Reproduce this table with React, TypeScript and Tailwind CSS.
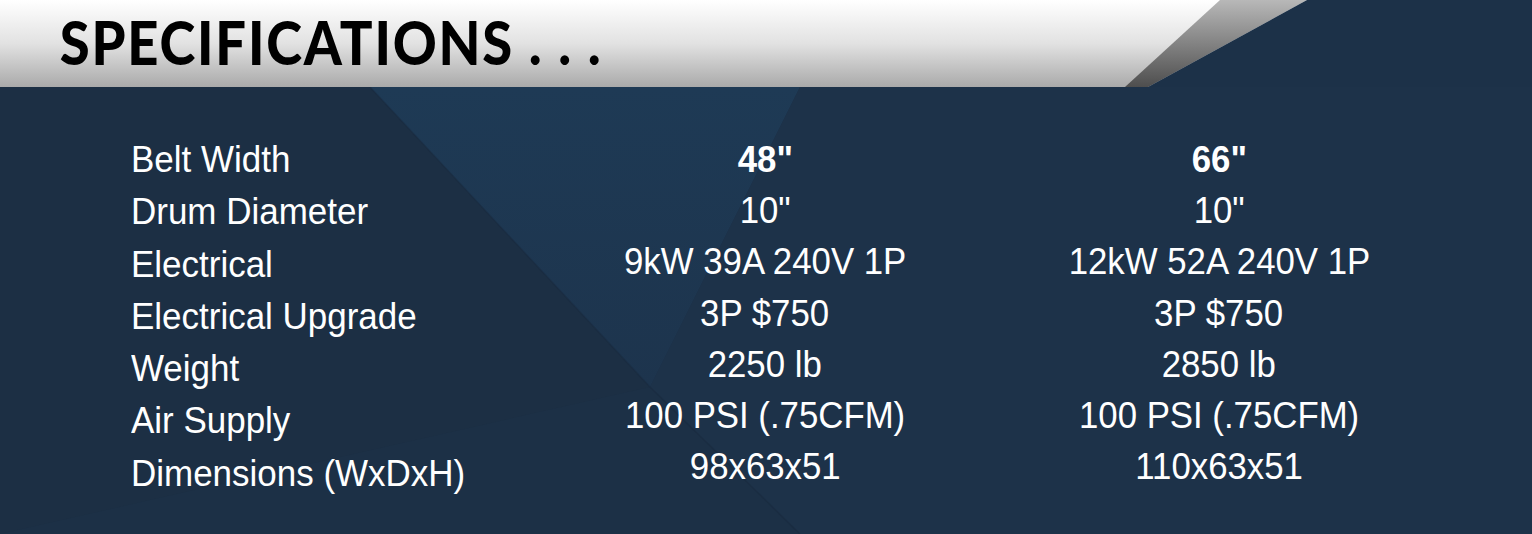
const specs: { label: string; a: string; b: string; bold?: boolean }[] = [
  { label: "Belt Width", a: '48"', b: '66"', bold: true },
  { label: "Drum Diameter", a: '10"', b: '10"' },
  { label: "Electrical", a: "9kW 39A 240V 1P", b: "12kW 52A 240V 1P" },
  { label: "Electrical Upgrade", a: "3P $750", b: "3P $750" },
  { label: "Weight", a: "2250 lb", b: "2850 lb" },
  { label: "Air Supply", a: "100 PSI (.75CFM)", b: "100 PSI (.75CFM)" },
  { label: "Dimensions (WxDxH)", a: "98x63x51", b: "110x63x51" },
];

function Backdrop() {
  return (
    <svg
      className="absolute inset-0 h-full w-full"
      viewBox="0 0 1532 447"
      preserveAspectRatio="none"
    >
      <defs>
        <linearGradient id="facet" x1="0" y1="0" x2="0" y2="1">
          <stop offset="0" stopColor="#1e3a55" />
          <stop offset="1" stopColor="#1d344d" />
        </linearGradient>
      </defs>
      <rect width="1532" height="447" fill="#1c3046" />
      <polygon points="0,0 370,0 650,300 0,447" fill="#1c2f44" />
      <polygon points="370,0 800,0 650,300" fill="url(#facet)" />
      <polygon points="800,0 1532,0 1532,447 800,447 650,300" fill="#1d3249" />
      <polyline points="370,0 650,300 800,447" fill="none" stroke="#18293c" strokeWidth="1.5" opacity="0.4" />
    </svg>
  );
}

export default function App() {
  return (
    <div className="w-[1532px] h-[534px] overflow-hidden bg-[#1c3046] font-['Liberation_Sans',Arial,sans-serif]">
      <div className="relative h-[87px] bg-gradient-to-b from-[#ffffff] via-[#e2e2e2] to-[#aaaaaa]">
        <h1 className="origin-left scale-x-[0.905] pl-[66px] pt-[8px] font-['Lato',sans-serif] text-[60px] leading-[68px] font-black tracking-[2px] text-black">
          SPECIFICATIONS . . .
        </h1>
        <svg
          className="absolute right-0 top-0 h-[87px] w-[412px]"
          viewBox="1120 0 412 87"
        >
          <defs>
            <linearGradient id="wedge" x1="0" y1="1" x2="0" y2="0">
              <stop offset="0" stopColor="#4e4e4e" />
              <stop offset="1" stopColor="#b8b8b8" />
            </linearGradient>
          </defs>
          <polygon points="1125,87 1220,0 1307,0 1148,87" fill="url(#wedge)" />
          <polygon points="1148,87 1307,0 1532,0 1532,87" fill="#1c3148" />
        </svg>
      </div>

      <div className="relative h-[447px]">
        <Backdrop />
        <div className="relative grid grid-cols-[408px_452px_456px] pl-[131px] pt-[47px] text-white text-[37px]">
          <div className="flex flex-col leading-[52.3px]">
            {specs.map((s) => (
              <div key={s.label} className="origin-left scale-x-[0.945] whitespace-nowrap">
                {s.label}
              </div>
            ))}
          </div>
          <div className="flex flex-col items-center leading-[51.2px]">
            {specs.map((s) => (
              <div key={s.label} className={`scale-x-[0.94] whitespace-nowrap ${s.bold ? "font-bold" : ""}`}>
                {s.a}
              </div>
            ))}
          </div>
          <div className="flex flex-col items-center leading-[51.2px]">
            {specs.map((s) => (
              <div key={s.label} className={`scale-x-[0.94] whitespace-nowrap ${s.bold ? "font-bold" : ""}`}>
                {s.b}
              </div>
            ))}
          </div>
        </div>
      </div>
    </div>
  );
}
